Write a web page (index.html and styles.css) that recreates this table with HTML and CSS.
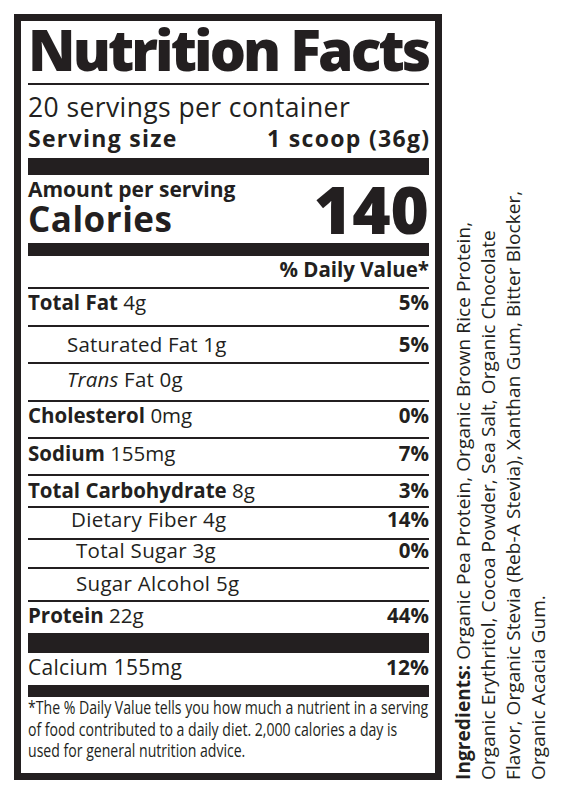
FILE: index.html
```html
<!DOCTYPE html>
<html lang="en">
<head>
<meta charset="utf-8">
<title>Nutrition Facts</title>
<link rel="stylesheet" href="styles.css">
</head>
<body>
<div class="page">
  <div class="label">
    <h1 class="title">Nutrition Facts</h1>
    <div class="rule"></div>
    <div class="servings">20 servings per container</div>
    <div class="serving-size"><span>Serving size</span><span>1 scoop (36g)</span></div>
    <div class="bar bar-lg"></div>
    <div class="cal-row">
      <div class="cal-left">
        <div class="amount">Amount per serving</div>
        <div class="calories">Calories</div>
      </div>
      <div class="cal-num">140</div>
    </div>
    <div class="bar bar-md"></div>
    <div class="dv-head">% Daily Value*</div>
    <div class="row r-fat"><span><b>Total Fat</b> 4g</span><b>5%</b></div>
    <div class="row r-sat"><span class="ind1">Saturated Fat 1g</span><b>5%</b></div>
    <div class="row r-trans"><span class="ind1"><i>Trans</i> Fat 0g</span></div>
    <div class="row r-chol"><span><b>Cholesterol</b> 0mg</span><b>0%</b></div>
    <div class="row r-sod"><span><b>Sodium</b> 155mg</span><b>7%</b></div>
    <div class="row r-carb"><span><b>Total Carbohydrate</b> 8g</span><b>3%</b></div>
    <div class="row r-fiber"><span class="ind2">Dietary Fiber 4g</span><b>14%</b></div>
    <div class="row r-sugar"><span class="ind3">Total Sugar 3g</span><b>0%</b></div>
    <div class="row r-alc"><span class="ind3">Sugar Alcohol 5g</span></div>
    <div class="row r-prot"><span><b>Protein</b> 22g</span><b>44%</b></div>
    <div class="bar bar-xl"></div>
    <div class="calcium"><span>Calcium 155mg</span><b>12%</b></div>
    <div class="bar bar-sm"></div>
    <div class="foot"><div class="foot-inner">*The % Daily Value tells you how much a nutrient in a serving<br>of food contributed to a daily diet. 2,000 calories a day is<br>used for general nutrition advice.</div></div>
  </div>
  <div class="ingredients"><b>Ingredients:</b> Organic Pea Protein, Organic Brown Rice Protein,<br>Organic Erythritol, Cocoa Powder, Sea Salt, Organic Chocolate<br>Flavor, Organic Stevia (Reb-A Stevia), Xanthan Gum, Bitter Blocker,<br>Organic Acacia Gum.</div>
</div>
<div class="below">Distributed by</div>
</body>
</html>
```

FILE: styles.css
```css
html { overflow: hidden; }
body {
  margin: 0;
  background: #fff;
  color: #231f20;
  font-family: "Open Sans", Lato, sans-serif;
}
.page {
  display: flex;
  align-items: flex-start;
  padding: 14px 0 0 14px;
}
.label {
  box-sizing: border-box;
  width: 428px;
  height: 766px;
  border: 7px solid #231f20;
  padding: 0 6px 0 7px;
  display: flex;
  flex-direction: column;
}
.title {
  margin: 0 0 6px 0;
  font-size: 57px;
  line-height: 56px;
  height: 56px;
  font-weight: 800;
  white-space: nowrap;
  letter-spacing: -2.9px;
}
.rule { height: 2px; background: #231f20; }
.servings {
  margin-top: 7px;
  font-size: 26.5px;
  line-height: 30px;
  letter-spacing: 0.4px;
}
.serving-size {
  margin-top: 3px;
  display: flex;
  justify-content: space-between;
  font-size: 23px;
  line-height: 26px;
  font-weight: 700;
  letter-spacing: 1.3px;
}
.serving-size span:last-child { margin-right: -1.3px; }
.bar { background: #231f20; }
.bar-lg { margin-top: 7px; height: 17px; }
.bar-md { margin-top: 4px; height: 13px; }
.bar-xl { height: 20px; }
.bar-sm { margin-top: 8px; height: 12px; }
.cal-row {
  display: flex;
  justify-content: space-between;
  align-items: flex-start;
  margin-top: 2px;
}
.amount { font-size: 21px; line-height: 24px; font-weight: 700; }
.calories { font-size: 35px; line-height: 36px; font-weight: 700; letter-spacing: 0.5px; }
.cal-num {
  margin-top: 2px;
  font-size: 65.5px;
  line-height: 60px;
  font-weight: 800;
}
.dv-head {
  margin: 1px 0 6px;
  text-align: right;
  font-size: 20.5px;
  line-height: 24px;
  font-weight: 700;
}
.row {
  box-sizing: border-box;
  display: flex;
  justify-content: space-between;
  border-top: 2px solid #231f20;
  font-size: 20.5px;
  line-height: 20px;
}
.ind1 { padding-left: 39px; letter-spacing: 0.2px; }
.ind2 { padding-left: 43px; letter-spacing: 0.3px; }
.ind3 { padding-left: 48px; letter-spacing: 0.3px; }
.r-fat { height: 38px; padding-top: 3px; }
.r-sat { height: 37px; padding-top: 7px; }
.r-trans { height: 38px; padding-top: 5px; }
.r-chol { height: 37px; padding-top: 3px; }
.r-sod { height: 37px; padding-top: 4px; }
.r-carb { height: 32px; padding-top: 4px; }
.r-fiber { height: 32px; padding-top: 1px; }
.r-sugar { height: 29px; padding-top: 0; }
.r-alc { height: 33px; padding-top: 4px; }
.r-prot { height: 33px; padding-top: 3px; }
.calcium {
  display: flex;
  justify-content: space-between;
  padding-top: 4px;
  font-size: 21px;
  line-height: 20px;
}
.calcium span { letter-spacing: 0.3px; }
.foot {
  font-size: 19px;
  line-height: 21.5px;
  white-space: nowrap;
}
.foot-inner {
  transform: scaleX(0.741);
  transform-origin: left top;
}
.ingredients {
  align-self: flex-end;
  margin-left: 9px;
  height: 600px;
  writing-mode: vertical-rl;
  transform: rotate(180deg);
  white-space: nowrap;
  font-size: 19px;
  line-height: 25px;
  letter-spacing: 0.1px;
}
.below {
  margin: 13px 0 0 31px;
  font-size: 20px;
  line-height: 24px;
  font-weight: 700;
}
```
